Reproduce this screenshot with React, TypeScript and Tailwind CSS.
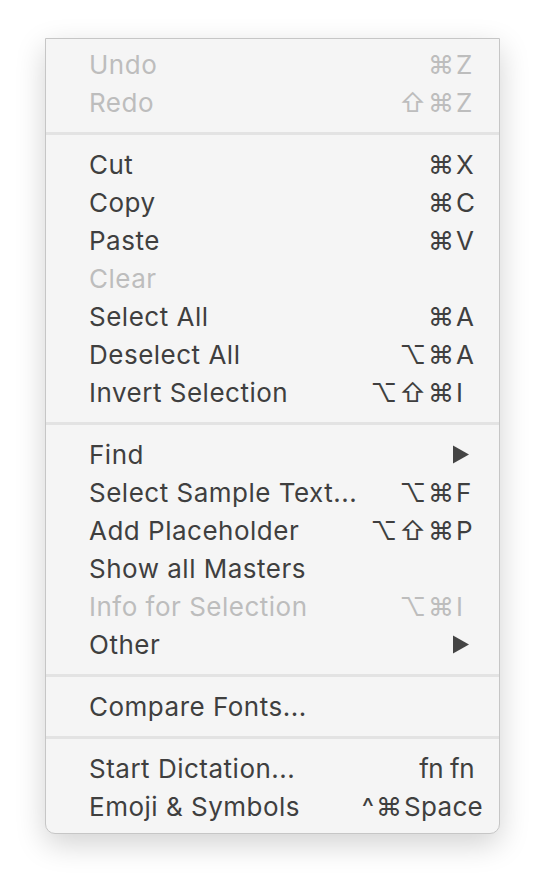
import React from "react";

type Item =
  | { sep: true }
  | {
      sep?: false;
      label: string;
      mods?: string;
      keyc?: string;
      disabled?: boolean;
      submenu?: boolean;
      raw?: string;
      wide?: boolean;
    };

const items: Item[] = [
  { label: "Undo", mods: "⌘", keyc: "Z", disabled: true },
  { label: "Redo", mods: "⇧⌘", keyc: "Z", disabled: true },
  { sep: true },
  { label: "Cut", mods: "⌘", keyc: "X" },
  { label: "Copy", mods: "⌘", keyc: "C" },
  { label: "Paste", mods: "⌘", keyc: "V" },
  { label: "Clear", disabled: true },
  { label: "Select All", mods: "⌘", keyc: "A" },
  { label: "Deselect All", mods: "⌥⌘", keyc: "A" },
  { label: "Invert Selection", mods: "⌥⇧⌘", keyc: "I" },
  { sep: true },
  { label: "Find", submenu: true },
  { label: "Select Sample Text...", mods: "⌥⌘", keyc: "F" },
  { label: "Add Placeholder", mods: "⌥⇧⌘", keyc: "P" },
  { label: "Show all Masters" },
  { label: "Info for Selection", mods: "⌥⌘", keyc: "I", disabled: true },
  { label: "Other", submenu: true },
  { sep: true },
  { label: "Compare Fonts..." },
  { sep: true },
  { label: "Start Dictation...", raw: "fn fn" },
  { label: "Emoji & Symbols", mods: "^⌘", keyc: "Space", wide: true },
];

export default function App() {
  return (
    <div
      className="w-[546px] h-[888px] bg-white pt-[38px] pl-[45px]"
      style={{ fontFamily: "Inter, 'Noto Sans', sans-serif" }}
    >
      <div className="w-[455px] bg-[#f5f5f5] border border-[#c6c6c6] rounded-b-[10px] pt-[6px] pb-[8px] shadow-[0_10px_30px_rgba(0,0,0,0.18)]">
        {items.map((it, i) =>
          it.sep ? (
            <div key={i} className="h-[24px] flex items-center">
              <div className="h-[3px] w-full bg-[#e3e3e3]" />
            </div>
          ) : (
            <div
              key={i}
              className={`h-[38px] flex items-center pl-[43px] pr-[25px] text-[26px] ${
                it.disabled ? "text-[#bdbdbd]" : "text-[#3f3f3f]"
              }`}
            >
              <span className="flex-1 whitespace-nowrap tracking-[0.5px]">{it.label}</span>
              {it.submenu && (
                <svg width="18" height="19" viewBox="0 0 18 19" className="mr-[4px]">
                  <path d="M1 0.5 L17 9.5 L1 18.5 Z" fill="#444" />
                </svg>
              )}
              {it.raw && <span className="whitespace-nowrap tracking-[-0.5px]">{it.raw}</span>}
              {it.keyc && (
                <span className="flex items-center whitespace-nowrap">
                  <span className="tracking-[2px]">{it.mods}</span>
                  <span className={it.wide ? "mr-[-9px] tracking-[0.3px]" : "w-[18px]"}>{it.keyc}</span>
                </span>
              )}
            </div>
          )
        )}
      </div>
    </div>
  );
}
